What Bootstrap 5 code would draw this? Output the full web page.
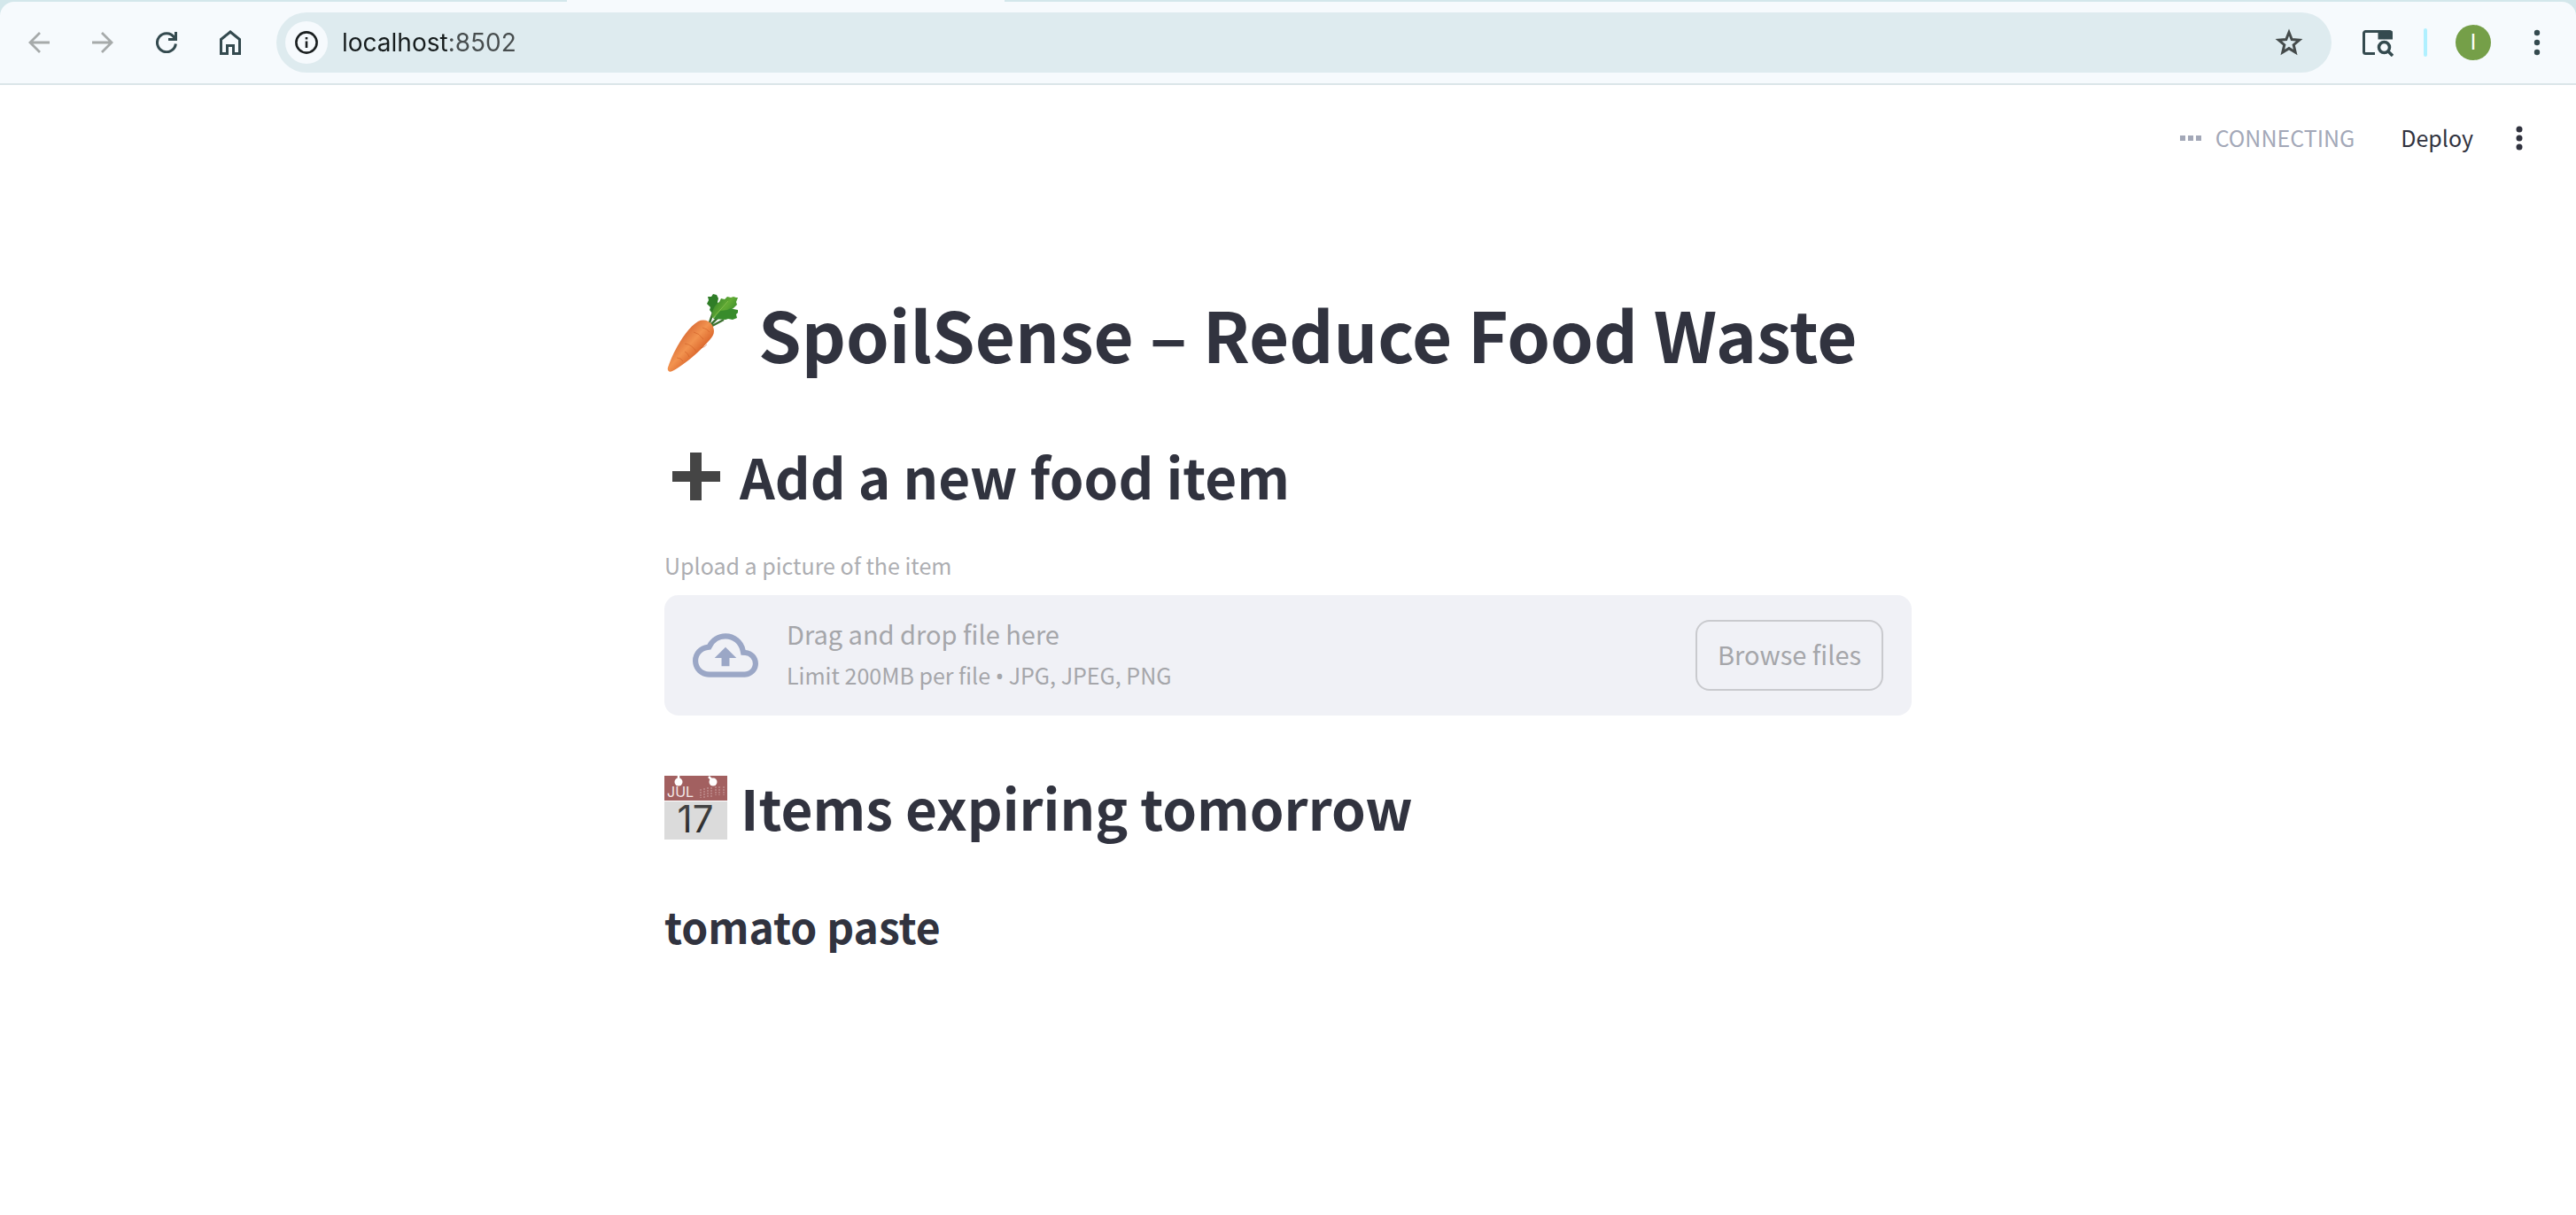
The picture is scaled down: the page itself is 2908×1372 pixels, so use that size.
<!DOCTYPE html>
<html lang="en">
<head>
<meta charset="utf-8">
<meta name="viewport" content="width=device-width, initial-scale=1">
<title>SpoilSense</title>
<link href="https://cdn.jsdelivr.net/npm/bootstrap@5.3.0/dist/css/bootstrap.min.css" rel="stylesheet">
<style>
  body { font-family: "Noto Sans CJK SC", "Noto Sans", sans-serif; color: #31333f; background: #fff; }
  svg { display: block; flex: none; }
  .browser { background: #d3e7eb; padding-top: 2px; }
  .active-tab { position: absolute; top: 0; left: 22%; width: 17%; height: 2px; background: #f6fafd; }
  .toolbar { background: #f6fafd; border-bottom: 2px solid #dbe5e8; border-radius: 16px 16px 0 0; height: 94px; padding: 0 20px; gap: 28px; }
  .tool { border: 0; background: none; padding: 0; width: 48px; height: 48px; display: flex; align-items: center; justify-content: center; color: #344a4f; }
  .tool:disabled { color: #a6aaaa; }
  .omnibox { background: #deebef; border-radius: 34px; height: 68px; padding: 0 24px 0 10px; }
  .site-info { background: #f6fafd; border-radius: 50%; color: #1a1f20; }
  .url-field { border: 0; outline: 0; padding: 0; font: 400 28px/36px Inter, sans-serif; color: transparent;
    background: linear-gradient(90deg, #161c1d 120px, #474d4e 120px); -webkit-background-clip: text; background-clip: text; }
  .divider { width: 4px; height: 32px; border-radius: 2px; background: #b0f0ff; }
  .avatar { width: 40px; height: 40px; border-radius: 50%; background: #759f48; color: #fff; font: 24px/40px Inter, sans-serif; border: 0; padding: 0; }
  .app-header { height: 120px; padding: 0 40px; font-size: 25px; line-height: 40px; }
  .status { color: #a3a8b8; }
  .plain { border: 0; background: none; padding: 0; color: inherit; font: inherit; margin-right: 28px; }
  .status span, .plain, .browse, .drop-text { padding-bottom: 3px !important; }
  .app-main { max-width: 1408px; margin: 107px auto 0; }
  h1, h2, h3 { margin: 0; font-weight: 700; color: #31333f; }
  h1 { font-size: 78px; line-height: 106px; margin-bottom: 65px; }
  h2 { font-size: 62px; line-height: 86px; }
  h3 { font-size: 48px; line-height: 68px; }
  .expiring { margin-top: 60px; }
  .food { margin-top: 57px; }
  .upload-label { font-size: 25px; line-height: 40px; color: #adaeb2; margin: 38px 0 14px; }
  .dropzone { background: #f0f1f6; border-radius: 16px; height: 136px; padding: 0 32px; color: #a5a6aa; }
  .drop-text { padding-left: 32px; }
  .drop-title { font-size: 29px; line-height: 48px; }
  .drop-hint { font-size: 25px; line-height: 46px; }
  .bullet { font-family: "Noto Sans", sans-serif; }
  .browse { width: 212px; height: 80px; border: 2px solid #c9cace; border-radius: 16px; background: none; color: #a5a6aa; font-size: 29px; padding: 0; }
</style>
<script src="https://cdn.jsdelivr.net/npm/bootstrap@5.3.0/dist/js/bootstrap.bundle.min.js"></script>
</head>
<body>
<div class="browser position-relative">
  <div class="active-tab"></div>
  <nav class="toolbar d-flex align-items-center" aria-label="Browser toolbar">
    <div class="d-flex gap-4">
      <button class="tool" disabled aria-label="Back"><svg width="24" height="24" viewBox="0 0 24 24" fill="none" stroke="currentColor" stroke-width="2.800"><path d="M24 12H2M13 1 2 12l11 11"/></svg></button>
      <button class="tool" disabled aria-label="Forward"><svg width="24" height="24" viewBox="0 0 24 24" fill="none" stroke="currentColor" stroke-width="2.800"><path d="M0 12h22M11 1l11 11-11 11"/></svg></button>
      <button class="tool" aria-label="Reload"><svg width="24" height="24" viewBox="0 0 24 24" fill="none" stroke="currentColor" stroke-width="3"><path d="M22.400 13.500A10.500 10.500 0 1 1 20.500 6L22 8.500M22.500 0v8.500H14"/></svg></button>
      <button class="tool" aria-label="Home"><svg width="24" height="28" viewBox="0 0 24 28" fill="none" stroke="currentColor" stroke-width="3"><path d="M1.500 10.500 12 2l10.500 8.500v16h-7v-9h-7v9h-7z"/></svg></button>
    </div>
    <div class="omnibox d-flex align-items-center flex-grow-1">
      <button class="tool site-info" aria-label="Site information"><svg width="26" height="26" viewBox="0 0 26 26"><circle cx="13" cy="13" r="11.600" fill="none" stroke="currentColor" stroke-width="2.600"/><path d="M11.700 11.500h2.600V19h-2.600zM11.700 7h2.600v2.600h-2.600z" fill="currentColor"/></svg></button>
      <input class="url-field flex-grow-1 ms-3" type="text" value="localhost:8502" aria-label="Address">
      <button class="tool" aria-label="Bookmark this page"><svg width="32" height="32" viewBox="0 0 32 32"><path d="M16 4.500l3.200 8 8.500.7-6.500 5.500 2 8.300-7.200-4.400L8.800 27l2-8.300-6.500-5.500 8.500-.7z" fill="none" stroke="#454b4b" stroke-width="3"/></svg></button>
    </div>
    <button class="tool" aria-label="Side panel search"><svg width="36" height="32" viewBox="0 0 36 32"><path d="M15 28.500H4.500a2 2 0 0 1-2-2v-21a2 2 0 0 1 2-2h27a2 2 0 0 1 2 2V11H20V4" fill="none" stroke="currentColor" stroke-width="3"/><path d="M19 3h15.500v9H19z" fill="currentColor"/><circle cx="25.500" cy="21.500" r="6" fill="none" stroke="currentColor" stroke-width="3.500"/><path d="M30 26l5 5" stroke="currentColor" stroke-width="3.500"/></svg></button>
    <span class="divider"></span>
    <button class="avatar ms-1" aria-label="Profile">I</button>
    <button class="tool" aria-label="Browser menu"><svg width="8" height="30" viewBox="0 0 8 30" fill="currentColor"><circle cx="4" cy="4" r="3.200"/><circle cx="4" cy="15" r="3.200"/><circle cx="4" cy="26" r="3.200"/></svg></button>
  </nav>
</div>

<header class="app-header d-flex align-items-center justify-content-end">
  <div class="status d-flex align-items-center gap-3 me-5"><svg width="24" height="6" viewBox="0 0 24 6" fill="currentColor"><path d="M0 0h6v6H0zM9 0h6v6H9zM18 0h6v6h-6z"/></svg><span>CONNECTING</span></div>
  <button class="plain ms-1">Deploy</button>
  <button class="tool" aria-label="Main menu"><svg width="8" height="28" viewBox="0 0 8 28" fill="#31333f"><circle cx="4" cy="4" r="3.500"/><circle cx="4" cy="14" r="3.500"/><circle cx="4" cy="24" r="3.500"/></svg></button>
</header>

<main class="app-main">
  <h1 class="d-flex align-items-center">
    <svg width="106" height="106" viewBox="0 0 106 106" aria-label="carrot" role="img">
      <defs>
        <linearGradient id="root" x1=".25" y1=".3" x2=".7" y2=".75"><stop offset="0" stop-color="#d96a35"/><stop offset=".45" stop-color="#f2934f"/><stop offset="1" stop-color="#d3561f"/></linearGradient>
        <linearGradient id="leaf" x1="0" y1="0" x2="1" y2=".6"><stop offset="0" stop-color="#2f7d27"/><stop offset=".6" stop-color="#62ab34"/><stop offset="1" stop-color="#388c2c"/></linearGradient>
      </defs>
      <path d="M50 44l6-17M51 45l13-13M52 46l15-8" stroke="#3c7130" stroke-width="2.500"/>
      <path d="M55 32l-4-5 1-3-4-4 2-4-1-4 4 0 2-3 4 1 2 4-1 4 1 3-3 4z" fill="#2f7d27"/>
      <path d="M54 36c-1-8 3-15 8-18l2-4 4 1 3-3 4 1 3-1 3 1 2 0-2 5 1 3-4 4-4 2-3 4-9 1z" fill="url(#leaf)"/>
      <path d="M55 37l8-9 8-1 4-2 3 1 5 1 0 3-2 2 1 4-5 2-5-1-3 1z" fill="#388c2c"/>
      <path d="M55 36l17-19" stroke="#83bd4c" stroke-width="1" fill="none"/>
      <path d="M38 40c6-3 13-1 16 4 3 6 3 11-3 17C39 75 21 90 9 96c-4 2-6-1-5-4C9 76 24 48 38 40z" fill="url(#root)"/>
      <path d="M43 47q5 1 8 5M33 52q6 1 11 8M41 70q5-1 7-4M23 65q8 1 13 9M28 80q-1-4-5-6M14 81q5 0 7 4" stroke="#c9561f" stroke-width="1" fill="none" opacity=".5"/>
    </svg>
    <span>SpoilSense – Reduce Food Waste</span>
  </h1>

  <h2 class="d-flex align-items-center">
    <svg width="85" height="86" viewBox="0 0 85 86" fill="#454545" role="img" aria-label="plus"><path d="M29 17h13v21h21v12H42v21H29V50H9V38h20z"/></svg>
    <span>Add a new food item</span>
  </h2>

  <label class="upload-label d-block" for="picture">Upload a picture of the item</label>
  <div class="dropzone d-flex align-items-center">
    <svg width="74" height="74" viewBox="0 0 24 24" fill="#9ba7c6"><path d="M19.350 10.040A7.490 7.490 0 0 0 12 4C9.110 4 6.600 5.640 5.350 8.040A5.994 5.994 0 0 0 0 14c0 3.310 2.690 6 6 6h13c2.760 0 5-2.240 5-5 0-2.640-2.050-4.780-4.650-4.960zM19 18H6c-2.210 0-4-1.790-4-4 0-2.050 1.530-3.760 3.560-3.970l1.070-.11.5-.95A5.469 5.469 0 0 1 12 6c2.620 0 4.880 1.860 5.390 4.430l.3 1.500 1.530.11A2.980 2.980 0 0 1 22 15c0 1.650-1.350 3-3 3zM8 13h2.550v3h2.900v-3H16l-4-4z"/></svg>
    <div class="drop-text flex-grow-1">
      <div class="drop-title">Drag and drop file here</div>
      <div class="drop-hint">Limit 200MB per file <span class="bullet">•</span> JPG, JPEG, PNG</div>
    </div>
    <input id="picture" class="visually-hidden" type="file" accept=".jpg,.jpeg,.png" disabled>
    <button class="browse" type="button">Browse files</button>
  </div>

  <h2 class="expiring d-flex align-items-center">
    <svg width="86" height="86" viewBox="0 0 86 86" role="img" aria-label="calendar">
      <defs><linearGradient id="ink" x1="0" y1="0" x2="0" y2="1"><stop offset="0" stop-color="#4d4d4d"/><stop offset="1" stop-color="#222"/></linearGradient></defs>
      <path d="M0 37h71v43H0z" fill="#dbdbdb"/>
      <path d="M0 8h71v28H0z" fill="#a26060"/>
      <path d="M16 8v6M50 9l4 4" stroke="#fff" stroke-width="2.500"/>
      <circle cx="16" cy="15" r="4.500" fill="#fff"/><circle cx="55" cy="15" r="4.500" fill="#fff"/>
      <path d="M41 23v10M45 22v11M49 21v12M53 21v11M58 20v10M62 20v10M67 20v10" stroke="#bd8a8a" stroke-width="1.500" stroke-dasharray="2 1"/>
      <text x="3" y="32" font-family="Inter, sans-serif" font-size="16" font-weight="400" fill="#f4e8e8">JUL</text>
      <text x="35" y="72" text-anchor="middle" font-family="Inter, sans-serif" font-size="42" font-weight="400" fill="url(#ink)">17</text>
    </svg>
    <span>Items expiring tomorrow</span>
  </h2>

  <h3 class="food">tomato paste</h3>
</main>
</body>
</html>
